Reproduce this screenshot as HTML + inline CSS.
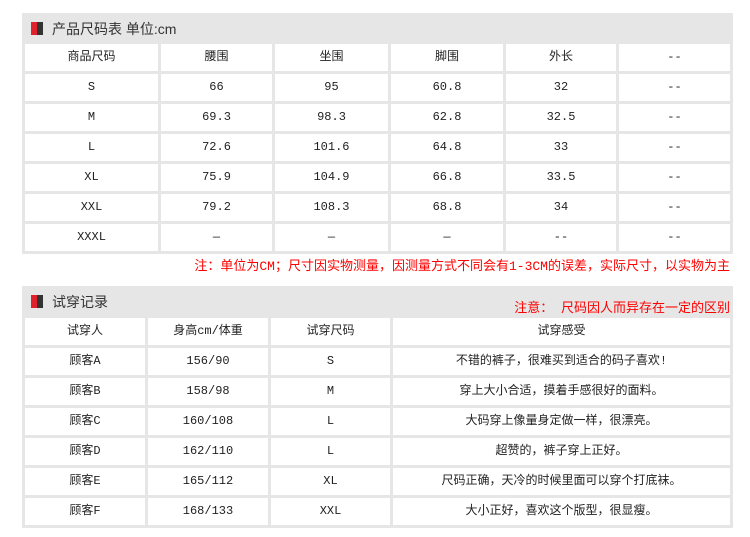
<!DOCTYPE html>
<html><head><meta charset="utf-8"><style>
body{margin:0;background:#fff;width:750px;height:537px;position:relative;overflow:hidden;font-family:"Liberation Mono","Noto Sans CJK SC",monospace;color:#222}
.bar{position:absolute;left:22px;width:711px;background:#e6e6e6}
.t{position:absolute;font-size:14px;color:#333;font-family:"Liberation Sans","Noto Sans CJK SC",sans-serif}
.ic{position:absolute;width:12px;height:13px;background:linear-gradient(90deg,#e0202a 0 6px,#333 6px)}
table{position:absolute;left:22px;border-collapse:separate;border-spacing:3px;background:#e6e6e6;table-layout:fixed}
td{background:#fff;text-align:center;font-size:12px;padding:0;height:27px;line-height:27px;white-space:nowrap;overflow:hidden}
.red{position:absolute;color:#f00;font-size:13px;white-space:nowrap;font-family:"Liberation Mono","Noto Sans CJK SC",monospace}
</style></head><body>
<div class="bar" style="top:13px;height:31px"></div>
<div class="ic" style="left:31px;top:22px"></div>
<div class="t" style="left:52px;top:19px">产品尺码表 单位:cm</div>
<table style="top:41px;width:711px">
<colgroup><col style="width:133px"><col style="width:111px"><col style="width:113px"><col style="width:112px"><col style="width:110px"><col style="width:111px"></colgroup>
<tr><td>商品尺码</td><td>腰围</td><td>坐围</td><td>脚围</td><td>外长</td><td>--</td></tr>
<tr><td>S</td><td>66</td><td>95</td><td>60.8</td><td>32</td><td>--</td></tr>
<tr><td>M</td><td>69.3</td><td>98.3</td><td>62.8</td><td>32.5</td><td>--</td></tr>
<tr><td>L</td><td>72.6</td><td>101.6</td><td>64.8</td><td>33</td><td>--</td></tr>
<tr><td>XL</td><td>75.9</td><td>104.9</td><td>66.8</td><td>33.5</td><td>--</td></tr>
<tr><td>XXL</td><td>79.2</td><td>108.3</td><td>68.8</td><td>34</td><td>--</td></tr>
<tr><td>XXXL</td><td>—</td><td>—</td><td>—</td><td>--</td><td>--</td></tr>
</table>
<div class="red" style="right:20px;top:255px">注：单位为CM；尺寸因实物测量，因测量方式不同会有1-3CM的误差，实际尺寸，以实物为主</div>
<div class="bar" style="top:286px;height:32px"></div>
<div class="ic" style="left:31px;top:295px"></div>
<div class="t" style="left:52px;top:292px">试穿记录</div>
<div class="red" style="right:20px;top:297px">注意： 尺码因人而异存在一定的区别</div>
<table style="top:315px;width:711px">
<colgroup><col style="width:120px"><col style="width:120px"><col style="width:119px"><col style="width:337px"></colgroup>
<tr><td>试穿人</td><td>身高cm/体重</td><td>试穿尺码</td><td>试穿感受</td></tr>
<tr><td>顾客A</td><td>156/90</td><td>S</td><td>不错的裤子，很难买到适合的码子喜欢!</td></tr>
<tr><td>顾客B</td><td>158/98</td><td>M</td><td>穿上大小合适，摸着手感很好的面料。</td></tr>
<tr><td>顾客C</td><td>160/108</td><td>L</td><td>大码穿上像量身定做一样，很漂亮。</td></tr>
<tr><td>顾客D</td><td>162/110</td><td>L</td><td>超赞的，裤子穿上正好。</td></tr>
<tr><td>顾客E</td><td>165/112</td><td>XL</td><td>尺码正确，天冷的时候里面可以穿个打底袜。</td></tr>
<tr><td>顾客F</td><td>168/133</td><td>XXL</td><td>大小正好，喜欢这个版型，很显瘦。</td></tr>
</table>
</body></html>
